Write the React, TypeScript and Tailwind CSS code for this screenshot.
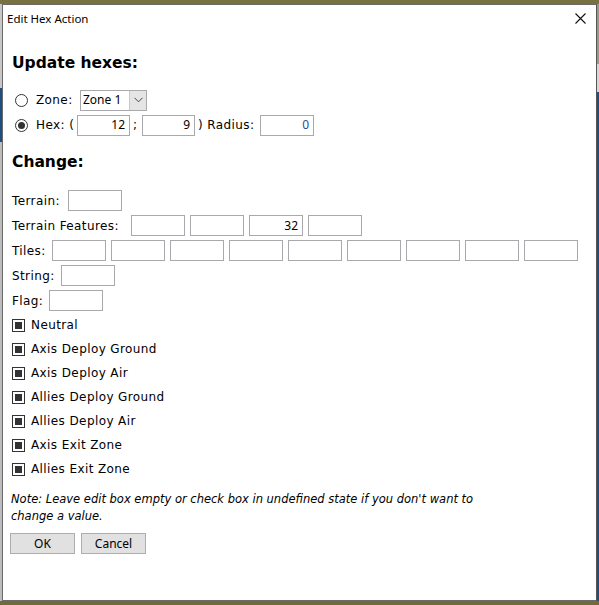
import React from "react";

const body = { fontFamily: '"DejaVu Sans", Verdana, sans-serif' } as const;
const ui = { fontFamily: '"Noto Sans", "Segoe UI", sans-serif' } as const;

function Box({ value, narrow = false, blue = false }: { value?: string; narrow?: boolean; blue?: boolean }) {
  return (
    <div
      className={`${narrow ? "w-[53px]" : "w-[54px]"} h-[21px] shrink-0 border border-[#a9a9ad] bg-white flex items-center justify-end pr-[4px] text-[12px] tracking-normal ${blue ? "text-[#1d4e9e]" : "text-black"}`}
      style={ui}
    >
      {value}
    </div>
  );
}

function Check({ label }: { label: string }) {
  return (
    <div className="h-[24px] flex items-center pl-[9px]">
      <div className="w-[13px] h-[13px] border border-[#333333] bg-white flex items-center justify-center">
        <div className="w-[7px] h-[7px] bg-[#333333]" />
      </div>
      <span className="ml-[6px] text-[12px] tracking-[0.4px] text-black">{label}</span>
    </div>
  );
}

export default function App() {
  const tiles = ["", "", "", "", "", "", "", "", ""];
  return (
    <div className="w-[599px] h-[605px] bg-[#6f6b3c] flex flex-col overflow-hidden">
      <div className="h-[4px] bg-[#77723f]" />
      <div className="flex h-[597px]">
        <div className="w-[2px] flex flex-col">
          <div className="h-[84px] bg-[#c8c8c8]" />
          <div className="h-[54px] bg-[#1f4f80]" />
          <div className="flex-1 bg-[#bdbdbd]" />
        </div>
        <div className="w-[595px] h-[597px] bg-white border border-[#6a6a6a] border-r-[#555555] flex flex-col" style={body}>
          {/* Title bar */}
          <div className="h-[27px] flex items-center justify-between pl-[4px] pr-[10px]">
            <span className="text-[11.5px] text-black" style={ui}>Edit Hex Action</span>
            <svg width="11" height="11" viewBox="0 0 11 11">
              <path d="M0.5 0.5 L10.5 10.5 M10.5 0.5 L0.5 10.5" stroke="#111" strokeWidth="1.1" />
            </svg>
          </div>
          <div className="pl-[9px] flex flex-col text-[12px] tracking-[0.4px] text-black">
            <div className="mt-[22px] h-[20px] flex items-center text-[15.5px] tracking-normal font-bold">Update hexes:</div>
            <div className="mt-[14px] h-[24px] flex items-center">
              <div className="ml-[3px] w-[13px] h-[13px] rounded-full border border-[#333333] bg-white" />
              <span className="ml-[8px] w-[44px]">Zone:</span>
              <div className="w-[67px] h-[21px] border border-[#a9a9ad] bg-white flex items-center tracking-normal" style={ui}>
                <span className="pl-[2px] flex-1 text-[12px]">Zone 1</span>
                <div className="w-[17px] h-[19px] bg-[#e5e5e5] border-l border-[#c8c8c8] flex items-center justify-center">
                  <svg width="9" height="6" viewBox="0 0 9 6">
                    <path d="M0.5 0.8 L4.5 4.8 L8.5 0.8" stroke="#444" strokeWidth="1" fill="none" />
                  </svg>
                </div>
              </div>
            </div>
            <div className="mt-[1px] h-[24px] flex items-center">
              <div className="ml-[3px] w-[13px] h-[13px] rounded-full border border-[#333333] bg-white flex items-center justify-center">
                <div className="w-[7px] h-[7px] rounded-full bg-[#333333]" />
              </div>
              <span className="ml-[8px] w-[41px] shrink-0 whitespace-nowrap">Hex: (</span>
              <Box value="12" narrow />
              <span className="w-[12px] shrink-0 pl-[3px]">;</span>
              <Box value="9" narrow />
              <span className="w-[65px] shrink-0 pl-[3px] whitespace-nowrap">) Radius:</span>
              <Box value="0" blue />
            </div>
            <div className="mt-[16px] h-[20px] flex items-center text-[15.5px] tracking-normal font-bold">Change:</div>
            <div className="mt-[15px] h-[25px] flex items-center">
              <span className="w-[56px]">Terrain:</span>
              <Box />
            </div>
            <div className="h-[25px] flex items-center">
              <span className="w-[119px] whitespace-nowrap">Terrain Features:</span>
              <div className="flex gap-[5px]">
                <Box />
                <Box />
                <Box value="32" />
                <Box />
              </div>
            </div>
            <div className="h-[25px] flex items-center">
              <span className="w-[40px]">Tiles:</span>
              <div className="flex gap-[5px]">
                {tiles.map((t, i) => (
                  <Box key={i} value={t} />
                ))}
              </div>
            </div>
            <div className="h-[25px] flex items-center">
              <span className="w-[49px]">String:</span>
              <Box />
            </div>
            <div className="h-[25px] flex items-center">
              <span className="w-[37px]">Flag:</span>
              <Box />
            </div>
          </div>
          <div className="flex flex-col">
            <Check label="Neutral" />
            <Check label="Axis Deploy Ground" />
            <Check label="Axis Deploy Air" />
            <Check label="Allies Deploy Ground" />
            <Check label="Allies Deploy Air" />
            <Check label="Axis Exit Zone" />
            <Check label="Allies Exit Zone" />
          </div>
          <div className="mt-[10px] pl-[8px] w-[510px] text-[11.5px] leading-[17px] italic text-black">
            Note: Leave edit box empty or check box in undefined state if you don't want to change a value.
          </div>
          <div className="mt-[8px] pl-[7px] flex gap-[6px]" style={ui}>
            <div className="w-[65px] h-[21px] bg-[#e1e1e1] border border-[#adadad] flex items-center justify-center text-[12px] text-black">OK</div>
            <div className="w-[65px] h-[21px] bg-[#e1e1e1] border border-[#adadad] flex items-center justify-center text-[12px] text-black">Cancel</div>
          </div>
        </div>
        <div className="w-[2px] flex flex-col">
          <div className="h-[60px] bg-[#9a9a8a]" />
          <div className="h-[28px] bg-[#d8d8d8]" />
          <div className="flex-1 bg-[#1f4f80]" />
        </div>
      </div>
    </div>
  );
}
